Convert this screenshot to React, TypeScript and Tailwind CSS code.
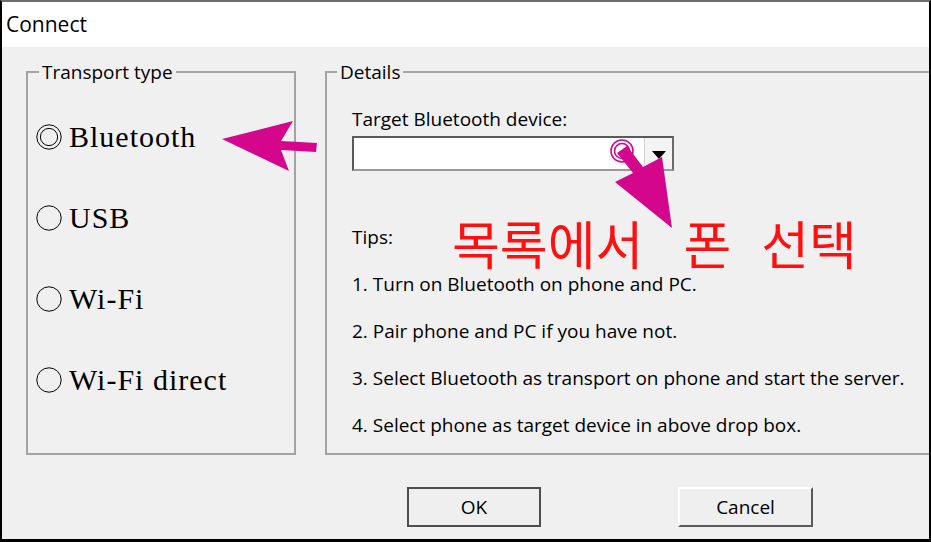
import React from "react";

function Radio({ double }: { double?: boolean }) {
  return (
    <svg width="26" height="26" viewBox="0 0 26 26" className="shrink-0">
      <circle cx="13" cy="13" r="12.2" fill="none" stroke="#000" strokeWidth="1" />
      {double && <circle cx="13" cy="13" r="8.6" fill="none" stroke="#000" strokeWidth="1" />}
    </svg>
  );
}

const serif = { fontFamily: '"Liberation Serif", "DejaVu Serif", serif' };

export default function App() {
  const options = [
    { label: "Bluetooth", double: true },
    { label: "USB" },
    { label: "Wi-Fi" },
    { label: "Wi-Fi direct" },
  ];
  const tips = [
    "Tips:",
    "1. Turn on Bluetooth on phone and PC.",
    "2. Pair phone and PC if you have not.",
    "3. Select Bluetooth as transport on phone and start the server.",
    "4. Select phone as target device in above drop box.",
  ];
  return (
    <div
      className="relative w-[931px] h-[542px] overflow-hidden text-black"
      style={{ fontFamily: '"Open Sans", "Noto Sans", sans-serif' }}
    >
      <div className="w-full h-full flex flex-col bg-[#f0f0f0] border-l-2 border-r-2 border-b-[3px] border-t-2 border-l-black border-r-black border-b-black border-t-[#6e6e6e] overflow-hidden">
        {/* title bar */}
        <div className="h-[45px] shrink-0 bg-white flex items-center pl-[4px] text-[21px]">Connect</div>

        {/* group boxes */}
        <div className="flex pl-[24px] pt-[12px] gap-[29px]">
          <fieldset className="w-[270px] h-[396px] shrink-0 border-2 border-[#a3a3a3]">
            <legend className="ml-[11px] px-[3px] text-[19px] leading-[26px]">Transport type</legend>
            <div className="flex flex-col mt-[11px]">
              {options.map((o) => (
                <div key={o.label} className="h-[81px] flex items-center pl-[8px] gap-[7px]">
                  <Radio double={o.double} />
                  <span className="text-[30px] tracking-[1px] leading-none" style={serif}>
                    {o.label}
                  </span>
                </div>
              ))}
            </div>
          </fieldset>

          <fieldset className="w-[620px] h-[396px] shrink-0 border-2 border-[#a3a3a3]">
            <legend className="ml-[10px] px-[3px] text-[19px] leading-[26px]">Details</legend>
            <div className="flex flex-col pl-[25px]">
              <div className="mt-[21px] text-[19px] leading-[26px]">Target Bluetooth device:</div>
              <div className="mt-[4px] w-[322px] h-[35px] flex bg-white border-2 border-t-[#5a5a5a] border-l-[#5a5a5a] border-r-[#6a6a6a] border-b-[#9a9a9a]">
                <div className="flex-1" />
                <div className="w-[28px] h-full flex items-center justify-center bg-[#f4f4f4] border-l border-l-[#d0d0d0]">
                  <svg width="14" height="8" viewBox="0 0 14 8" className="mt-[3px]">
                    <polygon points="0,0 14,0 7,8" fill="#000" />
                  </svg>
                </div>
              </div>
              <div className="mt-[53px] flex flex-col gap-[21px] text-[19px] leading-[26px]">
                {tips.map((t) => (
                  <div key={t}>{t}</div>
                ))}
              </div>
            </div>
          </fieldset>
        </div>

        {/* buttons */}
        <div className="flex mt-[32px] pl-[405px] gap-[137px]">
          <button className="w-[134px] h-[40px] bg-[#efefef] border-2 border-[#4e4e4e] text-[19px]">OK</button>
          <button className="w-[135px] h-[40px] bg-[#efefef] border-2 border-t-white border-l-white border-r-[#5a5a5a] border-b-[#5a5a5a] text-[19px]">
            Cancel
          </button>
        </div>
      </div>

      {/* annotation overlay */}
      <svg className="absolute left-0 top-0 pointer-events-none" width="931" height="542" viewBox="0 0 931 542">
        <polygon
          points="222,139 293,121 281,141 317,143 316,152 281,150 289,171"
          fill="#d4068c"
        />
        <circle cx="622" cy="151" r="11" fill="none" stroke="#d4068c" strokeWidth="1.6" />
        <circle cx="622" cy="151" r="7.5" fill="none" stroke="#d4068c" strokeWidth="1.6" />
        <polygon
          points="617,153 627,146 643,167 662,157 672,228 615,182 633,173"
          fill="#d4068c"
        />
      </svg>
      <div
        className="absolute left-[452px] top-[217px] flex text-[52px] leading-[52px] text-[#ff1010] whitespace-nowrap"
        style={{ fontFamily: '"Noto Sans CJK KR", sans-serif' }}
      >
        <span>목록에서</span>
        <span className="ml-[40px]">폰</span>
        <span className="ml-[30px]">선택</span>
      </div>
    </div>
  );
}
